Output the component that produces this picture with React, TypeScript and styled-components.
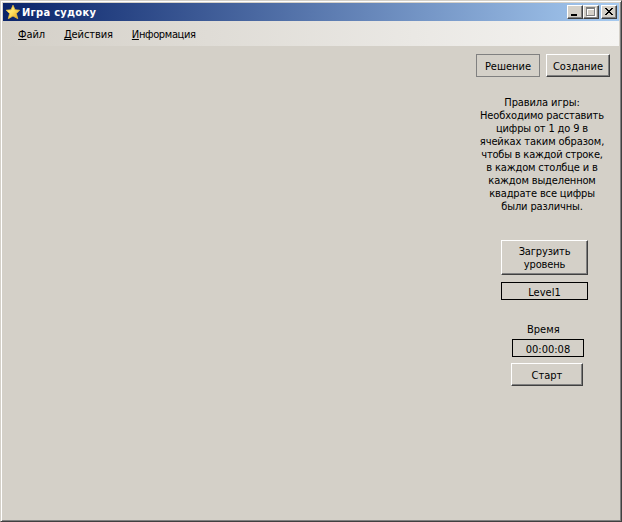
import React from "react";
import styled, { createGlobalStyle, css } from "styled-components";

const GlobalStyle = createGlobalStyle`
  * { box-sizing: border-box; }
  html, body { margin: 0; padding: 0; overflow: hidden; background: #d4d0c8; }
  button { font: inherit; letter-spacing: inherit; color: inherit; }
`;

const Window = styled.div`
  width: 622px;
  height: 522px;
  display: flex;
  flex-direction: column;
  padding: 1px;
  background: #d4d0c8;
  border: 1px solid;
  border-color: #d4d0c8 #404040 #404040 #d4d0c8;
  box-shadow: inset 1px 1px #fff, inset -1px -1px #808080;
  font: 11px/13px "DejaVu Sans Condensed", "DejaVu Sans", sans-serif;
  font-stretch: condensed;
  color: #000;
`;

const TitleBar = styled.header`
  flex: none;
  display: flex;
  align-items: center;
  height: 18px;
  margin: 1px 1px 0;
  padding: 0 2px 0 2px;
  background: linear-gradient(to right, #0a246a, #a6caf0);
`;

const Title = styled.h1`
  flex: 1;
  margin: 0 0 0 1px;
  padding-top: 1px;
  font-size: 11px;
  line-height: 18px;
  font-weight: bold;
  letter-spacing: 0.3px;
  color: #fff;
  white-space: nowrap;
`;

const raised = css`
  border: 1px solid;
  border-color: #fff #404040 #404040 #fff;
  box-shadow: inset -1px -1px #808080;
`;

const CaptionButton = styled.button<{ $gap?: boolean }>`
  width: 16px;
  height: 14px;
  padding: 0;
  margin-left: ${(p) => (p.$gap ? 2 : 0)}px;
  background: #d4d0c8;
  ${raised}
  svg { display: block; }
`;

const MenuBar = styled.nav`
  flex: none;
  display: flex;
  height: 25px;
  margin: 0 1px;
  padding-left: 15px;
  gap: 19px;
  background: linear-gradient(to right, #d4d0c8, #f5f4f2);
  line-height: 27px;
`;

const MenuItem = styled.span<{ $spacing?: number }>`
  letter-spacing: ${(p) => p.$spacing ?? 0}px;
  white-space: nowrap;
  u { text-decoration-skip-ink: none; }
`;

const Body = styled.main`
  flex: 1;
  display: flex;
  justify-content: flex-end;
  padding: 8px 10px 0 0;
`;

const SidePanel = styled.aside`
  width: 134px;
  display: flex;
  flex-direction: column;
`;

const Modes = styled.div`
  display: flex;
  gap: 6px;
`;

const Button = styled.button<{ $width: number; $height: number; $flat?: boolean }>`
  width: ${(p) => p.$width}px;
  height: ${(p) => p.$height}px;
  padding: ${(p) => (p.$height < 30 ? 2 : 0)}px 0 0;
  background: #d4d0c8;
  white-space: nowrap;
  ${(p) => (p.$flat ? css`border: 1px solid #808080;` : raised)}
`;

const Rules = styled.p`
  margin: 19px 0 27px;
  width: 132px;
  text-align: center;
`;

const Line = styled.span<{ $spacing?: number }>`
  display: block;
  letter-spacing: ${(p) => p.$spacing ?? 0}px;
  white-space: nowrap;
`;

const Group = styled.section<{ $left: number; $gap: number }>`
  display: flex;
  flex-direction: column;
  align-items: flex-start;
  gap: ${(p) => p.$gap}px;
  margin-left: ${(p) => p.$left}px;
`;

const Field = styled.output<{ $width: number }>`
  width: ${(p) => p.$width}px;
  height: 18px;
  border: 1px solid #000;
  line-height: 19px;
  text-align: center;
`;

const TimeLabel = styled.div`
  margin: 23px 0 3px 51px;
`;

const Timer = styled(Field)`
  margin-left: 1px;
`;

const Star = () => (
  <svg width="16" height="16" viewBox="0 0 16 16">
    <defs>
      <linearGradient id="gold" x1="0" y1="0" x2="1" y2="1">
        <stop offset="0" stopColor="#fff6a0" />
        <stop offset=".5" stopColor="#ffe060" />
        <stop offset="1" stopColor="#e09a10" />
      </linearGradient>
    </defs>
    <path d="M8 1.2 10 5.8 14.6 6.2 11.3 9.6 12.8 14.7 8 12 3.3 14.7 4.6 9.6 1.2 6.2 6 5.8Z" fill="url(#gold)" stroke="#e8bc40" strokeWidth=".8" strokeLinejoin="round" />
  </svg>
);

const rules: [string, number][] = [
  ["Правила игры:", -0.1],
  ["Необходимо расставить", -0.12],
  ["цифры от 1 до 9 в", -0.15],
  ["ячейках таким образом,", -0.1],
  ["чтобы в каждой строке,", -0.2],
  ["в каждом столбце и в", -0.15],
  ["каждом выделенном", -0.15],
  ["квадрате все цифры", -0.15],
  ["были различны.", -0.15],
];

export default function App() {
  return (
    <>
      <GlobalStyle />
      <Window>
        <TitleBar>
          <Star />
          <Title>Игра судоку</Title>
          <CaptionButton aria-label="Свернуть">
            <svg width="14" height="12" shapeRendering="crispEdges"><path d="M3 8h6v2H3z" /></svg>
          </CaptionButton>
          <CaptionButton aria-label="Развернуть">
            <svg width="14" height="12" shapeRendering="crispEdges" fillRule="evenodd">
              <path d="M3 2h9v9H3zM4 4v6h7V4z" fill="#fff" />
              <path d="M2 1h9v9H2zM3 3v6h7V3z" fill="#808080" />
            </svg>
          </CaptionButton>
          <CaptionButton aria-label="Закрыть" $gap>
            <svg width="14" height="12" shapeRendering="crispEdges">
              <path d="M3 2h2v1h1v1h2V3h1V2h2v1h-1v1H9v1H8v1h1v1h1v1h1v1H9V8H8V7H6v1H5v1H3V8h1V7h1V6h1V5H5V4H4V3H3z" />
            </svg>
          </CaptionButton>
        </TitleBar>
        <MenuBar>
          <MenuItem $spacing={-0.1}><u>Ф</u>айл</MenuItem>
          <MenuItem $spacing={-0.1}><u>Д</u>ействия</MenuItem>
          <MenuItem $spacing={-0.35}><u>И</u>нформация</MenuItem>
        </MenuBar>
        <Body>
          <SidePanel>
            <Modes>
              <Button $width={64} $height={23} $flat>Решение</Button>
              <Button $width={64} $height={23}>Создание</Button>
            </Modes>
            <Rules>
              {rules.map(([text, spacing]) => (
                <Line key={text} $spacing={spacing}>{text}</Line>
              ))}
            </Rules>
            <Group $left={25} $gap={7}>
              <Button $width={87} $height={35}>
                <Line $spacing={-0.15}>Загрузить</Line>
                <Line $spacing={-0.15}>уровень</Line>
              </Button>
              <Field $width={87}>Level1</Field>
            </Group>
            <TimeLabel>Время</TimeLabel>
            <Group $left={35} $gap={6}>
              <Timer $width={72}>00:00:08</Timer>
              <Button $width={72} $height={23}>Старт</Button>
            </Group>
          </SidePanel>
        </Body>
      </Window>
    </>
  );
}
